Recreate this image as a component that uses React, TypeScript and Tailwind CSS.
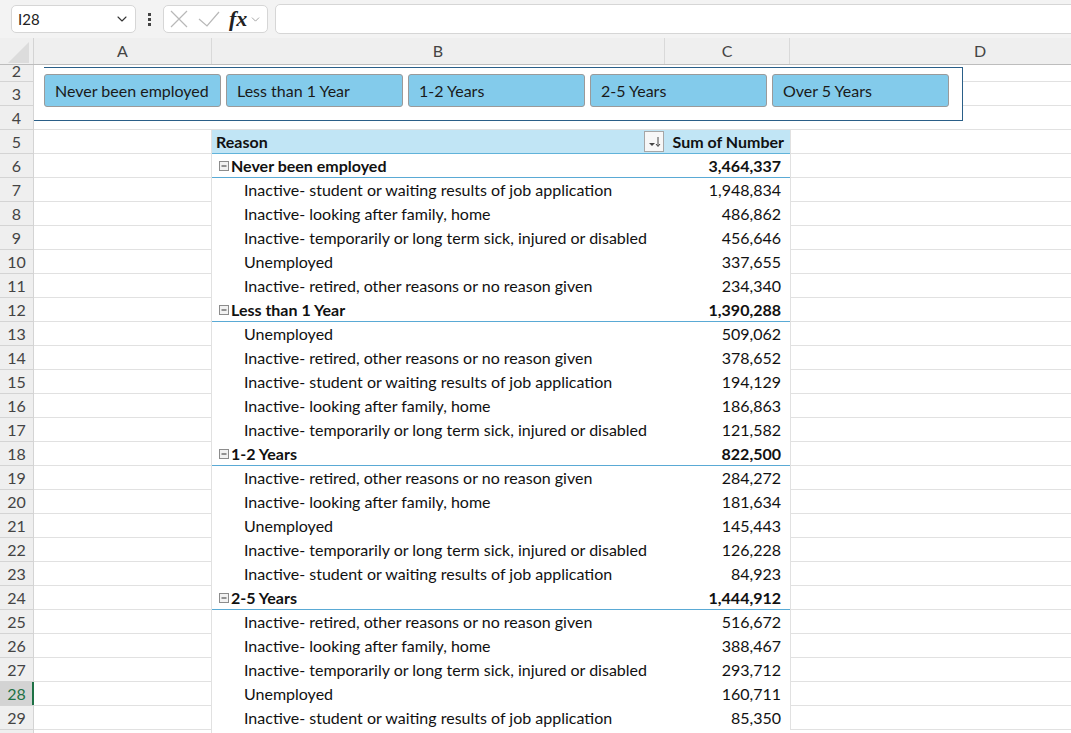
import React from "react";
import { ChevronDown } from "lucide-react";

type Row = { t: "g" | "i"; label: string; value: string };

const S = "Inactive- student or waiting results of job application";
const L = "Inactive- looking after family, home";
const T = "Inactive- temporarily or long term sick, injured or disabled";
const U = "Unemployed";
const R = "Inactive- retired, other reasons or no reason given";

const data: Row[] = [
  { t: "g", label: "Never been employed", value: "3,464,337" },
  { t: "i", label: S, value: "1,948,834" },
  { t: "i", label: L, value: "486,862" },
  { t: "i", label: T, value: "456,646" },
  { t: "i", label: U, value: "337,655" },
  { t: "i", label: R, value: "234,340" },
  { t: "g", label: "Less than 1 Year", value: "1,390,288" },
  { t: "i", label: U, value: "509,062" },
  { t: "i", label: R, value: "378,652" },
  { t: "i", label: S, value: "194,129" },
  { t: "i", label: L, value: "186,863" },
  { t: "i", label: T, value: "121,582" },
  { t: "g", label: "1-2 Years", value: "822,500" },
  { t: "i", label: R, value: "284,272" },
  { t: "i", label: L, value: "181,634" },
  { t: "i", label: U, value: "145,443" },
  { t: "i", label: T, value: "126,228" },
  { t: "i", label: S, value: "84,923" },
  { t: "g", label: "2-5 Years", value: "1,444,912" },
  { t: "i", label: R, value: "516,672" },
  { t: "i", label: L, value: "388,467" },
  { t: "i", label: T, value: "293,712" },
  { t: "i", label: U, value: "160,711" },
  { t: "i", label: S, value: "85,350" },
];

const font = { fontFamily: "Lato, 'Liberation Sans', sans-serif" };

function RowHeader({ n, active }: { n?: number; active?: boolean }) {
  return (
    <div
      className={`relative w-[34px] shrink-0 h-full flex items-center justify-center border-r border-b border-[#d4d4d4] text-[16px] ${
        active ? "bg-[#d3d3d3] text-[#1e7145]" : "bg-[#efefef] text-[#444]"
      }`}
    >
      {n}
      {active && <div className="absolute right-[-1px] top-0 bottom-0 w-[2px] bg-[#1e7145]" />}
    </div>
  );
}

function CollapseIcon() {
  return (
    <svg width="10" height="10" viewBox="0 0 10 10" className="shrink-0">
      <rect x="0.5" y="0.5" width="9" height="9" fill="#f2f2f2" stroke="#8c8c8c" />
      <line x1="2.5" y1="5" x2="7.5" y2="5" stroke="#333" strokeWidth="1" />
    </svg>
  );
}

function FilterBtn() {
  return (
    <div className="w-[20px] h-[21px] border border-[#a6a6a6] bg-[#f7f7f7] flex items-center justify-center mr-[1px]">
      <svg width="14" height="12" viewBox="0 0 14 12">
        <path d="M2 7 L8 7 L5 10 Z" fill="#444" />
        <line x1="11" y1="1" x2="11" y2="10" stroke="#444" strokeWidth="1" />
        <path d="M9 8 L11 10.5 L13 8" fill="none" stroke="#444" strokeWidth="1" />
      </svg>
    </div>
  );
}

export default function App() {
  const btns = ["Never been employed", "Less than 1 Year", "1-2 Years", "2-5 Years", "Over 5 Years"];
  return (
    <div className="relative w-[1071px] h-[733px] overflow-hidden bg-white text-[#111]" style={font}>
      {/* Formula bar */}
      <div className="h-[38px] bg-[#f3f3f3] flex items-center">
        <div className="ml-[11px] w-[125px] h-[28px] bg-white border border-[#d6d6d6] rounded-[5px] flex items-center justify-between pl-[6px] pr-[5px]">
          <span className="text-[15px] text-[#222]">I28</span>
          <ChevronDown size={16} strokeWidth={1.6} color="#333" />
        </div>
        <div className="w-[27px] flex flex-col items-center justify-center gap-[2px]">
          <div className="w-[3px] h-[3px] bg-[#444]" />
          <div className="w-[3px] h-[3px] bg-[#444]" />
          <div className="w-[3px] h-[3px] bg-[#444]" />
        </div>
        <div className="w-[105px] h-[28px] bg-white border border-[#d6d6d6] rounded-[5px] flex items-center pl-[6px]">
          <svg width="18" height="18" viewBox="0 0 18 18" className="shrink-0">
            <path d="M1 1 L17 17 M17 1 L1 17" stroke="#b8b8b8" strokeWidth="1.2" fill="none" />
          </svg>
          <svg width="22" height="18" viewBox="0 0 22 18" className="shrink-0 ml-[10px]">
            <path d="M1 9 L9 16 L21 2" stroke="#b8b8b8" strokeWidth="1.2" fill="none" />
          </svg>
          <span
            className="ml-[9px] text-[22px] italic font-semibold text-[#222] leading-none"
            style={{ fontFamily: "'Liberation Serif', 'DejaVu Serif', serif" }}
          >
            fx
          </span>
          <ChevronDown size={13} strokeWidth={1.4} color="#888" className="ml-[2px]" />
        </div>
        <div className="ml-[7px] flex-1 h-[30px] bg-white border border-[#d6d6d6] rounded-[5px] mr-[-10px]" />
      </div>

      {/* Column headers */}
      <div className="h-[27px] flex bg-[#efefef] border-b border-[#bdbdbd] text-[16px] text-[#444]">
        <div className="w-[34px] shrink-0 relative border-r border-[#d4d4d4]">
          <svg width="30" height="26" viewBox="0 0 30 26" className="absolute left-0 top-0">
            <path d="M29 4 L29 25 L8 25 Z" fill="#dcdcdc" />
          </svg>
        </div>
        <div className="w-[178px] shrink-0 flex items-center justify-center border-r border-[#d9d9d9]">A</div>
        <div className="w-[453px] shrink-0 flex items-center justify-center border-r border-[#d9d9d9]">B</div>
        <div className="w-[125px] shrink-0 flex items-center justify-center border-r border-[#d9d9d9]">C</div>
        <div className="w-[380px] shrink-0 flex items-center justify-center">D</div>
      </div>

      {/* Rows 2-4 (under slicer) */}
      <div className="h-[17px] overflow-hidden flex">
        <div className="w-[34px] shrink-0 h-[17px] overflow-hidden bg-[#efefef] border-r border-b border-[#d4d4d4]">
          <div className="h-[24px] mt-[-6px] flex items-center justify-center text-[16px] text-[#444]">2</div>
        </div>
        <div className="flex-1 border-b border-[#e1e1e1]" />
      </div>
      {[3, 4].map((n) => (
        <div key={n} className="h-[24px] flex">
          <RowHeader n={n} />
          <div className="flex-1 border-b border-[#e1e1e1]" />
        </div>
      ))}

      {/* Pivot rows */}
      <div className="h-[24px] flex">
        <RowHeader n={5} />
        <div className="w-[178px] shrink-0 border-r border-b border-[#e1e1e1]" />
        <div className="w-[578px] shrink-0 flex items-center bg-[#c1e5f5] border-b border-[#61b3da] font-bold text-[16px]">
          <div className="w-[453px] flex items-center justify-between pl-[4px]">
            <span>Reason</span>
            <FilterBtn />
          </div>
          <div className="flex-1 text-right pr-[6px] whitespace-nowrap">Sum of Number</div>
        </div>
        <div className="flex-1 border-l border-b border-[#e1e1e1]" />
      </div>

      {data.map((r, i) => {
        const n = i + 6;
        return (
          <div key={n} className="h-[24px] flex">
            <RowHeader n={n} active={n === 28} />
            <div className="w-[178px] shrink-0 border-r border-b border-[#e1e1e1]" />
            {r.t === "g" ? (
              <div className="w-[578px] shrink-0 flex items-center border-b border-[#5aaad5] font-bold text-[16px]">
                <div className="w-[453px] flex items-center pl-[7px] gap-[2px]">
                  <CollapseIcon />
                  <span>{r.label}</span>
                </div>
                <div className="flex-1 text-right pr-[9px]">{r.value}</div>
              </div>
            ) : (
              <div className="w-[578px] shrink-0 flex items-center text-[16px]">
                <div className="w-[453px] pl-[32px] whitespace-nowrap">{r.label}</div>
                <div className="flex-1 text-right pr-[9px]">{r.value}</div>
              </div>
            )}
            <div className="flex-1 border-l border-b border-[#e1e1e1]" />
          </div>
        );
      })}
      <div className="h-[24px] flex">
        <RowHeader />
        <div className="w-[178px] shrink-0 border-r border-[#e1e1e1]" />
      </div>

      {/* Slicer (floating object) */}
      <div className="absolute left-[34px] top-[67px] w-[929px] h-[54px] bg-white border-r border-b border-[#2a5f88]">
        <div className="absolute left-[10px] right-0 top-0 h-px bg-[#2a5f88]" />
        <div className="absolute left-[10px] top-[7px] flex gap-[5px]">
          {btns.map((b) => (
            <div
              key={b}
              className="w-[177px] h-[33px] bg-[#83cbeb] border border-[#9a9a9a] rounded-[3px] flex items-center pl-[10px] text-[16px] text-[#1a1a1a]"
            >
              {b}
            </div>
          ))}
        </div>
      </div>
    </div>
  );
}
